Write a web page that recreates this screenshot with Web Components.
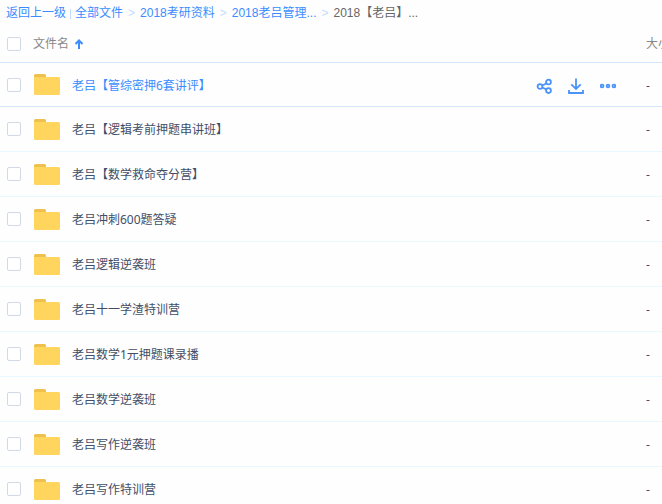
<!DOCTYPE html>
<html lang="zh-CN">
<head>
  <meta charset="utf-8">
  <meta name="viewport" content="width=device-width, initial-scale=1">
  <title>全部文件</title>
  <style>
    body {
      margin: 0;
      background: #fefefe;
      color: #424e67;
      font: 12px/16px "Noto Sans", "Noto Sans CJK SC", sans-serif;
      overflow: hidden;
    }
  </style>
</head>
<body>
  <path-bar>
    <a slot="back" href="#back">返回上一级</a>
    <a href="#all">全部文件</a>
    <a href="#kaoyan">2018考研资料</a>
    <a href="#guanli">2018老吕管理...</a>
    <span>2018【老吕】...</span>
  </path-bar>
  <file-list></file-list>

  <script>
    class PathBar extends HTMLElement {
      constructor(){
        super()
        this.attachShadow({mode: 'open'})
      }

      connectedCallback(){
        this.shadowRoot.innerHTML = `
          <style>
            :host {
              display: block;
              padding: 5px 6px;
              font-family: "Liberation Sans", "Noto Sans CJK SC", sans-serif;
              color: #666;
            }
            nav {
              display: flex;
              white-space: nowrap;
            }
            .line {
              width: 1px;
              height: 10px;
              margin: 4px 4px 0;
              background: #c4dbfe;
            }
            ::slotted(a) {
              color: #3b8cff;
              text-decoration: none;
            }
            ::slotted(a:not([slot]))::after {
              content: ">";
              padding: 0 5px;
              color: #c4dbfe;
            }
          </style>

          <nav aria-label="路径">
            <slot name="back"></slot>
            <span class="line"></span>
            <slot></slot>
          </nav>
        `
      }
    }

    class FolderIcon extends HTMLElement {
      constructor(){
        super()
        this.attachShadow({mode: 'open'}).innerHTML = `
          <style>
            :host {
              display: block;
              width: 26px;
              height: 21px;
            }
            svg {
              display: block;
            }
          </style>
          <svg width="26" height="21" viewBox="0 0 26 21" aria-hidden="true">
            <path d="M0 6V1.500Q0 0 1.500 0H10.500Q12 0 12 1.500V6Z" fill="#eec04c"/>
            <path d="M0 3H24.500Q26 3 26 4.500V19.500Q26 21 24.500 21H1.500Q0 21 0 19.500Z" fill="#ffd55d"/>
          </svg>
        `
      }
    }

    class RowActions extends HTMLElement {
      constructor(){
        super()
        this.attachShadow({mode: 'open'}).innerHTML = `
          <style>
            :host {
              display: flex;
              gap: 16px;
              padding-top: 2px;
              color: #4a93f8;
            }
            button {
              width: 16px;
              height: 16px;
              padding: 0;
              border: none;
              background: none;
              color: inherit;
              cursor: pointer;
            }
            svg {
              display: block;
              fill: none;
              stroke: currentColor;
              stroke-width: 1.8;
            }
          </style>
          <button aria-label="分享">
            <svg width="16" height="16" viewBox="0 0 16 16">
              <circle cx="4" cy="8.500" r="2.400"/>
              <circle cx="12.500" cy="4" r="2.400"/>
              <circle cx="12.500" cy="12.600" r="2.400"/>
              <path d="M6 7.500Q7.500 7 10.500 5.200M6 9.300Q7.500 10 10.500 11.600"/>
            </svg>
          </button>
          <button aria-label="下载">
            <svg width="16" height="16" viewBox="0 0 16 16">
              <path d="M8 0.500V11M3.300 6.300L8 11L12.700 6.300M1 12V15H15V12"/>
            </svg>
          </button>
          <button aria-label="更多">
            <svg width="16" height="16" viewBox="0 0 16 16">
              <circle cx="2.100" cy="8" r="1.400"/>
              <circle cx="8" cy="8" r="1.400"/>
              <circle cx="13.900" cy="8" r="1.400"/>
            </svg>
          </button>
        `
      }
    }

    class FileList extends HTMLElement {
      constructor(){
        super()
        this.attachShadow({mode: 'open'})
        this.files = [
          '老吕【管综密押6套讲评】',
          '老吕【逻辑考前押题串讲班】',
          '老吕【数学救命夺分营】',
          '老吕冲刺600题答疑',
          '老吕逻辑逆袭班',
          '老吕十一学渣特训营',
          '老吕数学1元押题课录播',
          '老吕数学逆袭班',
          '老吕写作逆袭班',
          '老吕写作特训营'
        ]
      }

      connectedCallback(){
        this.render()
      }

      row(name, i){
        return `
          <tr class="${i === 0 ? 'active' : ''}">
            <td class="check"><input type="checkbox" aria-label="${name}"></td>
            <td>
              <div class="name">
                <folder-icon></folder-icon>
                <a href="#file-${i}">${name}</a>
                ${i === 0 ? '<row-actions></row-actions>' : ''}
              </div>
            </td>
            <td class="size">-</td>
          </tr>
        `
      }

      render(){
        this.shadowRoot.innerHTML = `
          <style>
            :host {
              display: block;
            }
            table {
              width: 100%;
              table-layout: fixed;
              border-spacing: 0;
            }
            th, td {
              height: 44px;
              padding: 0;
              border-bottom: 1px solid #e9f8ff;
              text-align: left;
              vertical-align: middle;
            }
            th {
              height: 36px;
              font-weight: normal;
              color: #888;
              border-color: #d4e7ff;
            }
            .active td {
              height: 43px;
              border-color: #d4e7ff;
            }
            .check {
              width: 33px;
            }
            .size {
              width: 16px;
              overflow: hidden;
              white-space: nowrap;
            }
            td.size {
              padding-top: 2px;
              height: 42px;
            }
            input {
              appearance: none;
              display: block;
              box-sizing: border-box;
              width: 14px;
              height: 14px;
              margin: 0 0 0 7px;
              border: 1px solid #d0d9e4;
              border-radius: 2px;
              background: #fff;
            }
            input:checked {
              background: #3b8cff;
            }
            .sort {
              display: flex;
              align-items: center;
              gap: 5px;
              padding: 0;
              border: none;
              background: none;
              font: inherit;
              color: inherit;
            }
            .name {
              display: flex;
              align-items: center;
              padding-left: 1px;
            }
            a {
              flex: 1;
              margin-left: 12px;
              padding-top: 2px;
              color: inherit;
              text-decoration: none;
            }
            .active a {
              color: #3b8cff;
            }
            .active td.size {
              height: 41px;
            }
            row-actions {
              margin-right: 30px;
            }
          </style>

          <table>
            <thead>
              <tr>
                <th class="check"><input type="checkbox" aria-label="全选"></th>
                <th>
                  <button class="sort">文件名
                    <svg width="10" height="10" viewBox="0 0 10 10" fill="none" stroke="#3b8cff" stroke-width="2" aria-hidden="true">
                      <path d="M5 10V1.500M1.500 5L5 1.500L8.500 5"/>
                    </svg>
                  </button>
                </th>
                <th class="size">大小</th>
              </tr>
            </thead>
            <tbody>${this.files.map((name, i) => this.row(name, i)).join('')}</tbody>
          </table>
        `
      }
    }

    customElements.define('path-bar', PathBar)
    customElements.define('folder-icon', FolderIcon)
    customElements.define('row-actions', RowActions)
    customElements.define('file-list', FileList)
  </script>
</body>
</html>
